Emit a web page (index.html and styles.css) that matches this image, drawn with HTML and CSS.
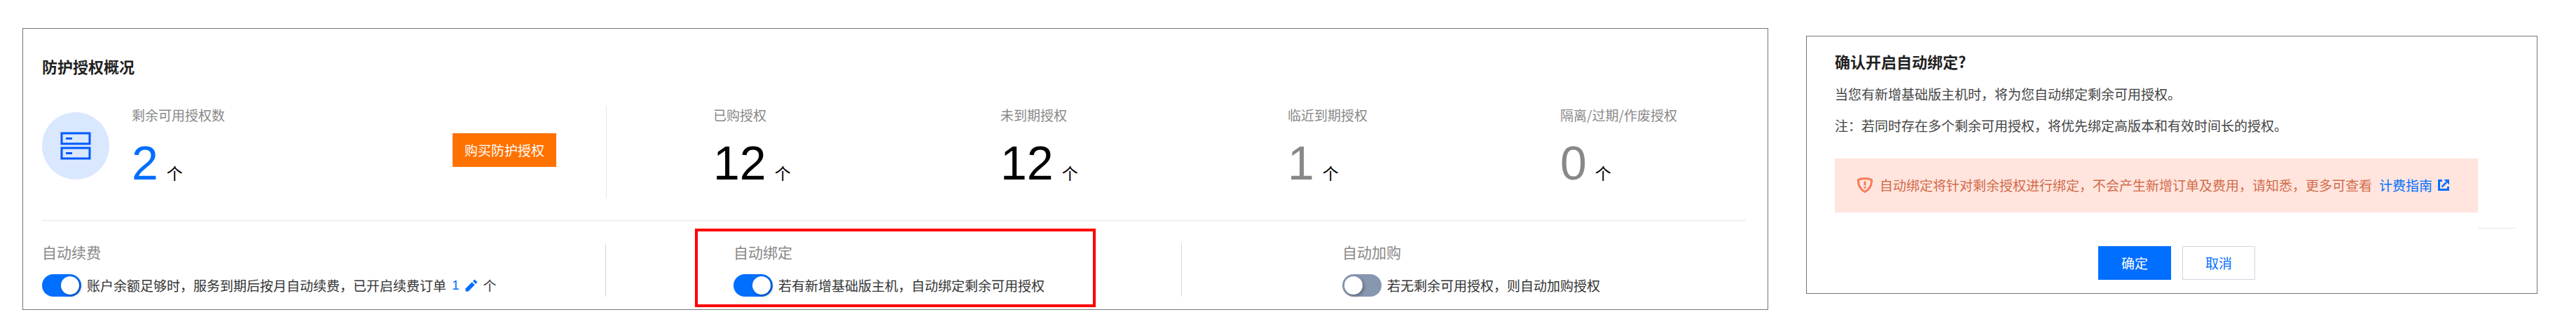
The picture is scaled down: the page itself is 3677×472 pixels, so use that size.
FILE: index.html
```
<!DOCTYPE html>
<html lang="zh-CN">
<head>
<meta charset="utf-8" />
<title>防护授权概况</title>
<link rel="stylesheet" href="styles.css">
</head>
<body>
<div class="page">
	<section class="panel overview">
		<h1 class="title">防护授权概况</h1>
		<div class="summary">
			<div class="remain">
				<span class="remainIcon">
					<svg width="44" height="40" viewBox="0 0 44 40" fill="none" stroke="#0059ff" stroke-width="3">
						<rect x="2" y="2" width="40" height="15" />
						<rect x="2" y="23" width="40" height="15" />
						<path d="M8 9.500h9M8 30.500h9" />
					</svg>
				</span>
				<div class="stat">
					<p class="label">剩余可用授权数</p>
					<p class="count"><b class="blue">2</b><span>个</span></p>
				</div>
				<button type="button" class="buy">购买防护授权</button>
			</div>
			<div class="stats">
				<div class="stat">
					<p class="label">已购授权</p>
					<p class="count"><b>12</b><span>个</span></p>
				</div>
				<div class="stat">
					<p class="label">未到期授权</p>
					<p class="count"><b>12</b><span>个</span></p>
				</div>
				<div class="stat">
					<p class="label">临近到期授权</p>
					<p class="count"><b class="gray">1</b><span>个</span></p>
				</div>
				<div class="stat">
					<p class="label">隔离/过期/作废授权</p>
					<p class="count"><b class="gray">0</b><span>个</span></p>
				</div>
			</div>
		</div>
		<div class="settings">
			<div class="setting renew">
				<div class="settingBox">
					<h2 class="settingName">自动续费</h2>
					<div class="switchRow">
						<input type="checkbox" class="switch" id="autoRenew" checked />
						<label for="autoRenew">账户余额足够时，服务到期后按月自动续费，已开启续费订单</label>
						<a href="#" class="edit">1
							<svg width="18" height="18" viewBox="0 0 18 18" fill="#006eff">
								<path d="M0.500 17.500v-4L9.700 4.300l4 4L4.500 17.500zM11 3l2.500-2.500 4 4L15 7z" />
							</svg>
						</a>
						<span>个</span>
					</div>
				</div>
			</div>
			<div class="setting bind">
				<div class="settingBox marked">
					<h2 class="settingName">自动绑定</h2>
					<div class="switchRow">
						<input type="checkbox" class="switch" id="autoBind" checked />
						<label for="autoBind">若有新增基础版主机，自动绑定剩余可用授权</label>
					</div>
				</div>
			</div>
			<div class="setting purchase">
				<div class="settingBox">
					<h2 class="settingName">自动加购</h2>
					<div class="switchRow">
						<input type="checkbox" class="switch" id="autoBuy" />
						<label for="autoBuy">若无剩余可用授权，则自动加购授权</label>
					</div>
				</div>
			</div>
		</div>
	</section>
	<section class="panel confirm">
		<h2 class="title">确认开启自动绑定?</h2>
		<p>当您有新增基础版主机时，将为您自动绑定剩余可用授权。</p>
		<p>注：若同时存在多个剩余可用授权，将优先绑定高版本和有效时间长的授权。</p>
		<div class="alert">
			<svg width="22" height="22" viewBox="0 0 22 22" fill="none" stroke="#f97c58" stroke-width="3">
				<path d="M11 1.500C14 1.500 17.500 2.200 20.500 3.500C20.800 10 18.500 16.500 11 20.500C3.500 16.500 1.200 10 1.500 3.500C4.500 2.200 8 1.500 11 1.500z" />
				<path d="M11 5.500v6M11 13v2.800" />
			</svg>
			<span>自动绑定将针对剩余授权进行绑定，不会产生新增订单及费用，请知悉，更多可查看</span>
			<a href="#" class="guide">计费指南
				<svg width="16" height="16" viewBox="0 0 16 16" fill="none" stroke="#006eff" stroke-width="3">
					<path d="M6 1.500H1.500v13h13V10" />
					<path d="M5.500 10.500L12 4" stroke-width="2.500" />
					<path d="M8.500 0H16v7.500z" fill="#006eff" stroke="none" />
				</svg>
			</a>
		</div>
		<hr class="rule" />
		<div class="actions">
			<button type="button" class="ok">确定</button>
			<button type="button" class="cancel">取消</button>
		</div>
	</section>
</div>
</body>
</html>
```
FILE: styles.css
```
* {
	padding:0;
	margin:0;
	box-sizing:border-box;
}
body {
	background:white;
	color:#333;
	font:19px/28px "Noto Sans CJK SC",sans-serif;
}
a {
	color:#006eff;
	text-decoration:none;
}
button {
	height:48px;
	border:none;
	font:inherit;
	cursor:pointer;
}
svg {
	display:block;
	flex:none;
}
.page {
	display:grid;
	grid-template-columns:2492fr 1044fr;
	gap:54px;
	align-items:start;
	padding:40px 55px 30px 32px;
}
.panel {
	border:1px solid #777;
}
.title {
	font-size:22px;
	line-height:32px;
	color:#222;
}

/* overview */
.overview {
	padding:37px 31px 18px 27px;
}
.summary {
	display:grid;
	grid-template-columns:806fr 1626fr;
	padding:42px 0 32px;
	border-bottom:1px solid #e7e7e7;
}
.remain {
	display:flex;
	align-items:flex-start;
	height:130px;
	padding-right:71px;
	border-right:1px solid #e7e7e7;
}
.remainIcon {
	display:flex;
	align-items:center;
	justify-content:center;
	width:96px;
	height:96px;
	margin:8px 32px 0 0;
	border-radius:50%;
	background:#d9e7ff;
}
.buy {
	margin:38px 0 0 auto;
	padding:0 17px;
	background:#ff7200;
	color:white;
}
.stats {
	display:grid;
	grid-template-columns:410fr 410fr 389fr 265fr;
	padding-left:152px;
}
.label {
	line-height:24px;
	color:#888;
}
.count {
	display:flex;
	align-items:baseline;
	gap:12px;
	margin-top:18px;
	line-height:28px;
	font-size:23px;
	color:black;
}
.count b {
	font-family:"Liberation Sans",sans-serif;
	font-size:68px;
	font-weight:normal;
	line-height:76px;
}
.count .blue {
	color:#006eff;
}
.count .gray {
	color:#888;
}

/* automatic settings */
.settings {
	display:grid;
	grid-template-columns:805fr 822fr 805fr;
	padding-top:32px;
}
.setting {
	display:flex;
	border-right:1px solid #cfd5de;
}
.bind {
	padding-left:182px;
}
.purchase {
	padding-left:229px;
	border:none;
}
.settingBox {
	position:relative;
}
.settingName {
	font-size:21px;
	font-weight:normal;
	line-height:24px;
	color:#888;
}
.switchRow {
	display:flex;
	align-items:center;
	gap:8px;
	margin-top:20px;
}
.switch {
	appearance:none;
	width:56px;
	height:32px;
	padding:3px;
	border-radius:16px;
	background:#8797b0;
	cursor:pointer;
}
.switch::before {
	content:"";
	display:block;
	width:26px;
	height:26px;
	border-radius:50%;
	background:white;
	box-shadow:2px 2px 4px rgba(0,0,0,0.3);
}
.switch:checked {
	background:#006eff;
}
.switch:checked::before {
	margin-left:auto;
}
.edit {
	display:flex;
	align-items:center;
	gap:8px;
	font-family:"Liberation Sans",sans-serif;
}
/* red frame drawn around the option being explained */
.marked::after {
	content:"";
	position:absolute;
	top:-21px;
	right:-73px;
	bottom:-15px;
	left:-55px;
	border:4px solid red;
	pointer-events:none;
}

/* confirm dialog */
.confirm {
	margin-top:11px;
	padding:19px 31px 19px 40px;
}
.confirm p {
	margin-top:17px;
	color:#444;
}
.alert {
	display:flex;
	align-items:center;
	gap:10px;
	margin:33px 53px 0 0;
	padding:24px 32px 25px;
	background:#ffe5de;
	color:#d26a48;
}
.guide {
	display:flex;
	align-items:center;
	gap:8px;
}
.rule {
	width:53px;
	margin:22px 0 0 auto;
	border:none;
	border-top:1px solid #e7e7e7;
}
.actions {
	display:flex;
	justify-content:center;
	gap:16px;
	margin-top:25px;
	padding-left:5px;
}
.actions button {
	width:104px;
}
.ok {
	background:#006eff;
	color:white;
}
.cancel {
	border:1px solid #cfd5de;
	background:white;
	color:#006eff;
}
```
